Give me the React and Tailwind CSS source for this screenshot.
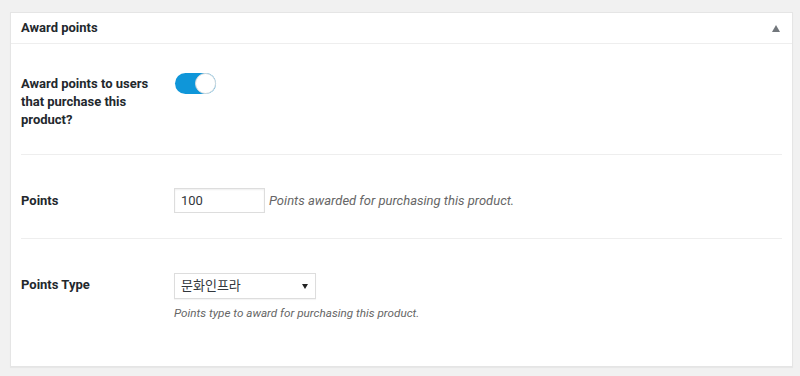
import React from "react";

export default function App() {
  return (
    <div
      className="min-h-[376px] w-[800px] bg-[#f1f1f1] pt-[12px] pl-[10px] pr-[7px] pb-[8px] text-[#23282d]"
      style={{ fontFamily: 'Roboto, "Noto Sans CJK KR", sans-serif' }}
    >
      <div className="border border-[#e5e5e5] bg-white shadow-[0_1px_1px_rgba(0,0,0,0.04)]">
        <div className="flex h-[31px] items-center justify-between border-b border-[#eeeeee] pl-[10px] pr-[12px]">
          <h2 className="text-[13px] font-bold">Award points</h2>
          <svg width="8" height="7" viewBox="0 0 8 7">
            <polygon points="4,0 8,7 0,7" fill="#72777c" />
          </svg>
        </div>

        <div className="px-[10px]">
          <div className="flex border-b border-[#eeeeee] pt-[29px] pb-[25px]">
            <div className="mt-[2px] w-[154px] text-[13px] font-bold leading-[18px]">
              Award points to users
              <br />
              that purchase this
              <br />
              product?
            </div>
            <button className="relative h-[21px] w-[41px] rounded-full bg-[#0f96d9]">
              <span className="absolute right-0 top-0 h-[21px] w-[21px] rounded-full border border-[#dddddd] bg-white" />
            </button>
          </div>

          <div className="flex items-center border-b border-[#eeeeee] pt-[33px] pb-[25px]">
            <div className="w-[153px] text-[13px] font-bold">Points</div>
            <input
              defaultValue="100"
              className="h-[25px] w-[91px] border border-[#dddddd] px-[6px] text-[13px] text-[#32373c] shadow-[inset_0_1px_2px_rgba(0,0,0,0.07)] outline-none"
            />
            <span className="ml-[4px] text-[13px] italic text-[#666666]">
              Points awarded for purchasing this product.
            </span>
          </div>

          <div className="flex pt-[34px] pb-[43px]">
            <div className="w-[153px] pt-[3px] text-[13px] font-bold leading-[18px]">
              Points Type
            </div>
            <div>
              <div className="flex h-[26px] w-[142px] items-center justify-between border border-[#dddddd] pl-[6px] pr-[7px] text-[13px] text-[#32373c] shadow-[0_1px_1px_rgba(0,0,0,0.04)]">
                <span>문화인프라</span>
                <svg width="6" height="6" viewBox="0 0 6 6">
                  <polygon points="0,1 6,1 3,6" fill="#222" />
                </svg>
              </div>
              <p className="mt-[6px] text-[11.7px] italic text-[#666666]">
                Points type to award for purchasing this product.
              </p>
            </div>
          </div>
        </div>
      </div>
    </div>
  );
}
